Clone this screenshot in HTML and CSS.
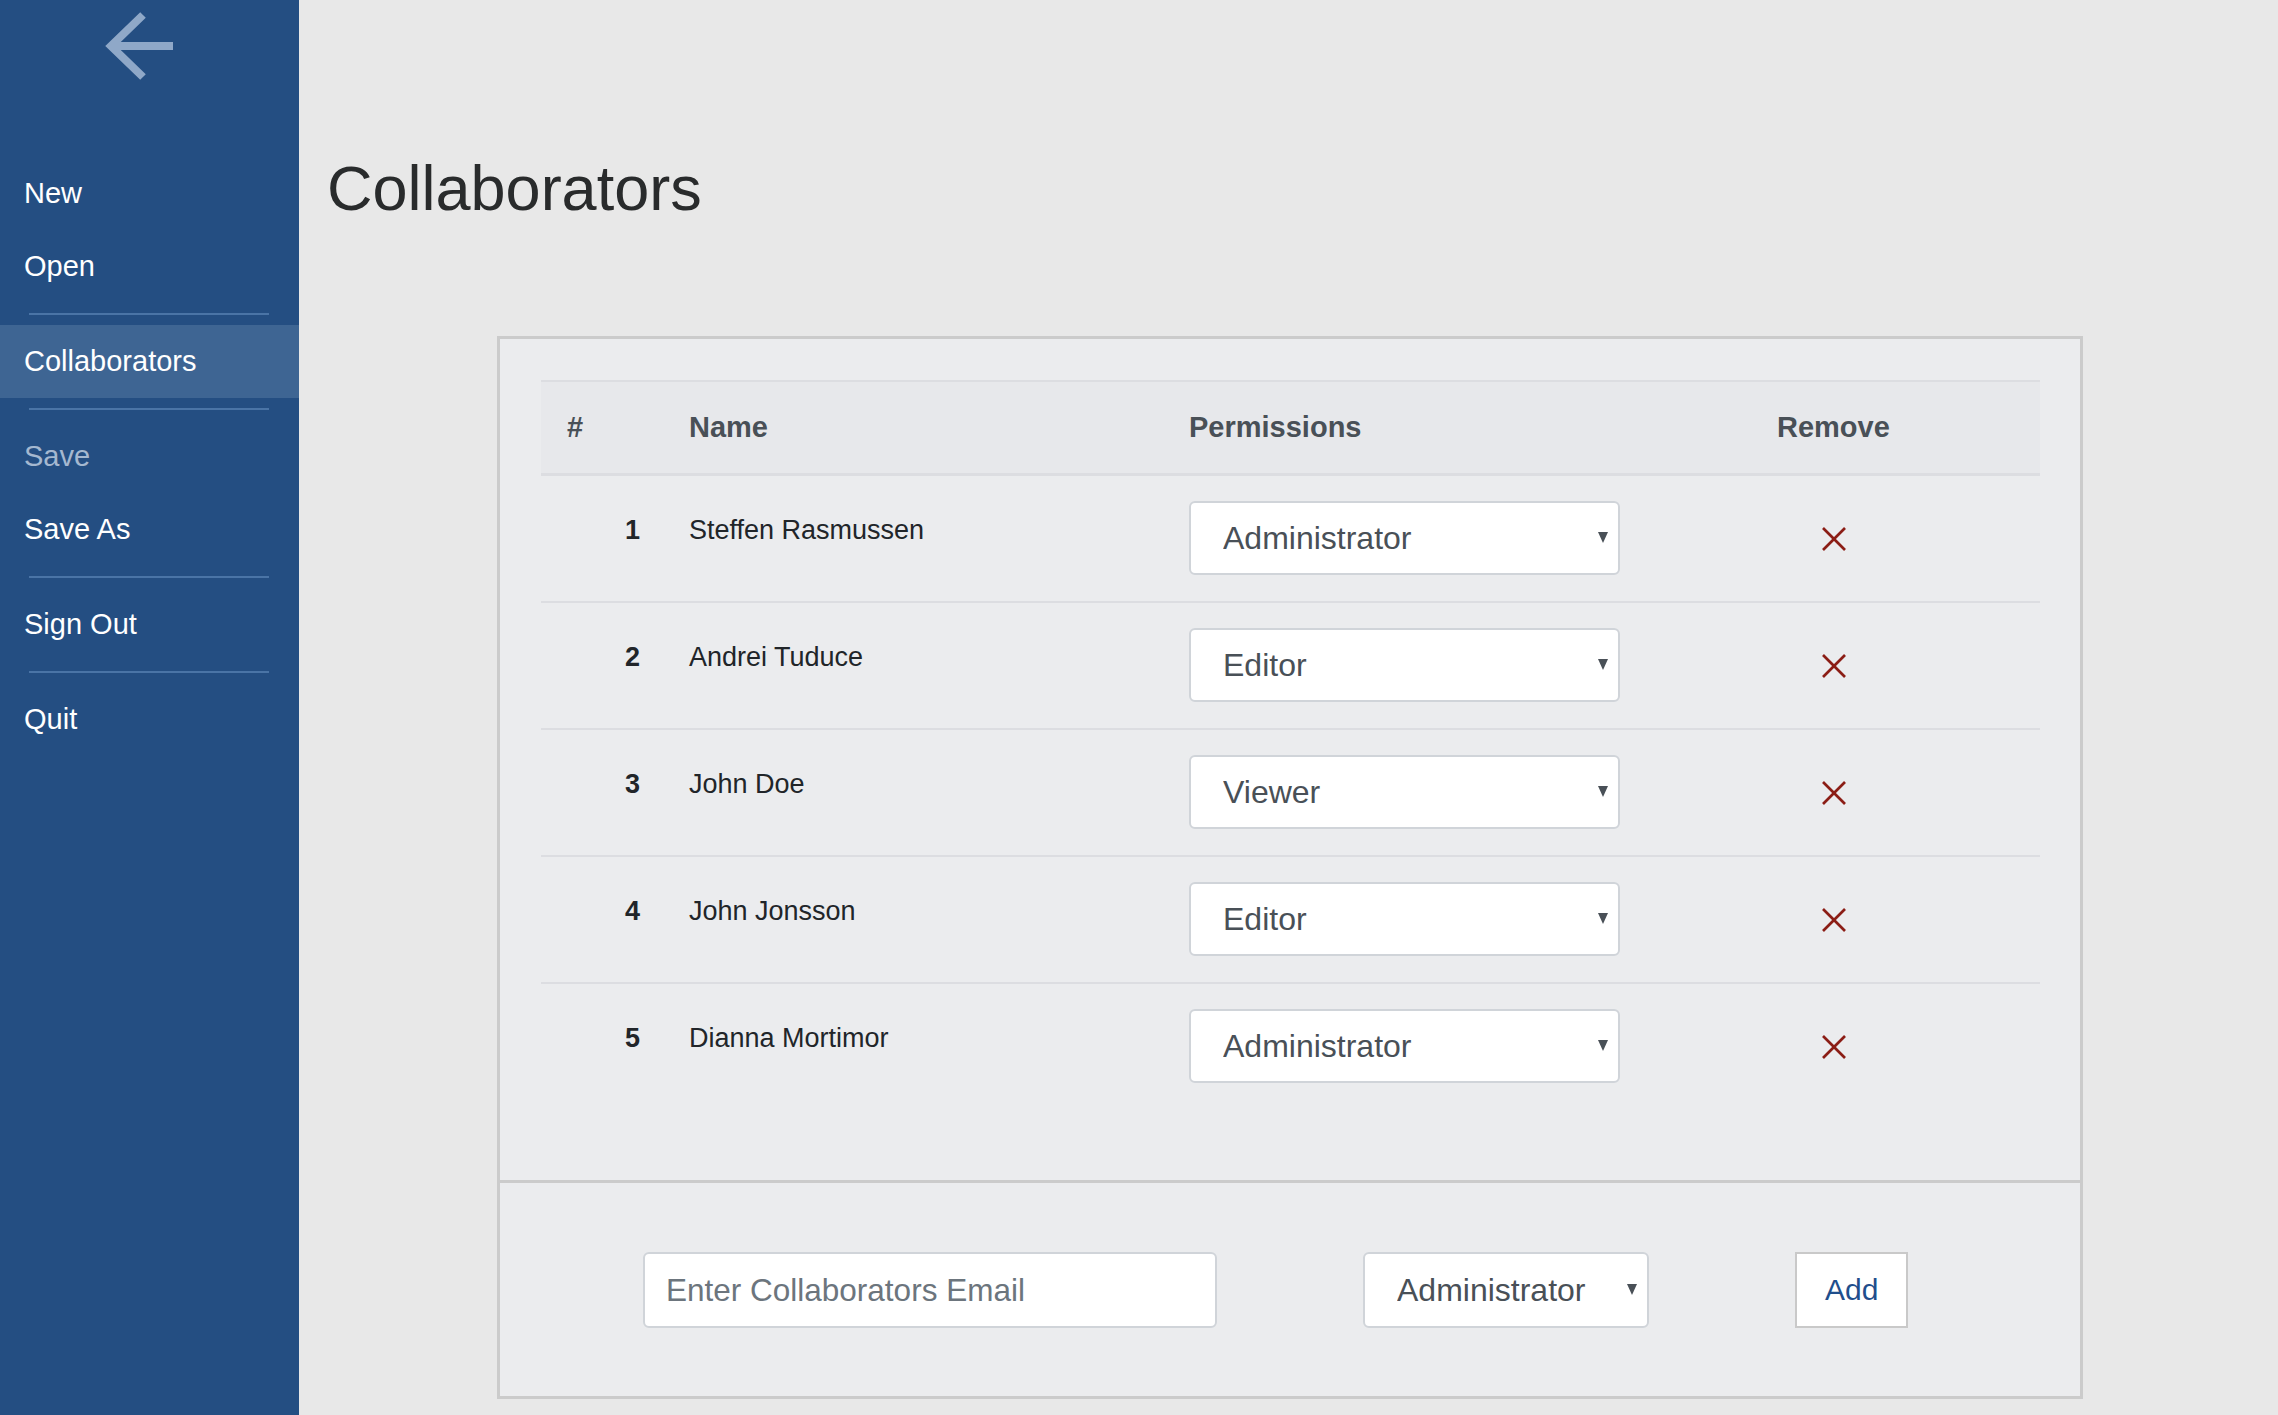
FILE: index.html
```html
<!DOCTYPE html>
<html lang="en">
<head>
    <meta charset="UTF-8">
    <title>Collaborators</title>
    <link rel="stylesheet" href="styles.css">
</head>
<body>

    <aside class="sidebar">
        <div class="back">
            <svg width="76" height="76" viewBox="0 0 76 76">
                <polyline points="42,7 10,38 42,69" fill="none" stroke="#8fa8c8" stroke-width="8"/>
                <line x1="10" y1="38" x2="72" y2="38" stroke="#8fa8c8" stroke-width="8"/>
            </svg>
        </div>
        <nav class="menu">
            <a class="menu-item" href="#">New</a>
            <a class="menu-item" href="#">Open</a>
            <hr class="menu-divider">
            <a class="menu-item active" href="#">Collaborators</a>
            <hr class="menu-divider">
            <a class="menu-item disabled" href="#">Save</a>
            <a class="menu-item" href="#">Save As</a>
            <hr class="menu-divider">
            <a class="menu-item" href="#">Sign Out</a>
            <hr class="menu-divider">
            <a class="menu-item" href="#">Quit</a>
        </nav>
    </aside>

    <main class="content">
        <h1 class="title">Collaborators</h1>

        <div class="panel">
            <div class="panel-body">
                <table class="collab-table">
                    <colgroup>
                        <col class="col-num">
                        <col class="col-name">
                        <col class="col-perm">
                        <col class="col-remove">
                    </colgroup>
                    <thead>
                        <tr>
                            <th class="num-head">#</th>
                            <th>Name</th>
                            <th>Permissions</th>
                            <th>Remove</th>
                        </tr>
                    </thead>
                    <tbody id="rows"></tbody>
                </table>
            </div>

            <div class="panel-footer">
                <input class="email-input" type="text" placeholder="Enter Collaborators Email">
                <div class="select-wrap small">
                    <select class="role-select">
                        <option selected>Administrator</option>
                        <option>Editor</option>
                        <option>Viewer</option>
                    </select>
                </div>
                <button class="add-btn">Add</button>
            </div>
        </div>
    </main>

    <script>
        const collaborators = [
            { name: "Steffen Rasmussen", role: "Administrator" },
            { name: "Andrei Tuduce", role: "Editor" },
            { name: "John Doe", role: "Viewer" },
            { name: "John Jonsson", role: "Editor" },
            { name: "Dianna Mortimor", role: "Administrator" }
        ];
        const roles = ["Administrator", "Editor", "Viewer"];

        const tbody = document.getElementById("rows");
        collaborators.forEach(function(person, i) {
            const options = roles.map(function(r) {
                return `<option${r === person.role ? " selected" : ""}>${r}</option>`;
            }).join("");
            const tr = document.createElement("tr");
            tr.innerHTML = `
                <td class="num">${i + 1}</td>
                <td class="name">${person.name}</td>
                <td><div class="select-wrap"><select class="role-select">${options}</select></div></td>
                <td><div class="remove">
                    <svg width="26" height="26" viewBox="0 0 26 26">
                        <line x1="2" y1="2" x2="24" y2="24" stroke="#8b1d15" stroke-width="2.6"/>
                        <line x1="24" y1="2" x2="2" y2="24" stroke="#8b1d15" stroke-width="2.6"/>
                    </svg>
                </div></td>
            `;
            tbody.appendChild(tr);
        });
    </script>

</body>
</html>
```

FILE: styles.css
```css
body {
    margin: 0;
    font-family: "Liberation Sans", Arial, sans-serif;
    background-color: #e8e8e8;
    display: flex;
    height: 1415px;
    overflow: hidden;
}

/* sidebar */
.sidebar {
    width: 299px;
    flex-shrink: 0;
    background-color: #244e82;
}
.back {
    height: 157px;
    box-sizing: border-box;
    padding: 8px 0 0 101px;
}
.back svg {
    display: block;
}
.menu-item {
    display: block;
    height: 73px;
    line-height: 73px;
    padding-left: 24px;
    font-size: 29px;
    color: #fff;
    text-decoration: none;
}
.menu-item.active {
    background-color: #3e6593;
}
.menu-item.disabled {
    color: #a5b8d0;
}
.menu-divider {
    border: none;
    height: 2px;
    background-color: #4a74a6;
    margin: 10px 30px 10px 29px;
}

/* main */
.content {
    flex: 1;
    padding-left: 28px;
}
.title {
    font-size: 63px;
    font-weight: normal;
    line-height: 77px;
    color: #292b2c;
    margin: 150px 0 109px 0;
}
.panel {
    width: 1586px;
    box-sizing: border-box;
    margin-left: 170px;
    border: 3px solid #cbcbcb;
    background-color: #ebecee;
}
.panel-body {
    padding: 41px 40px 71px 41px;
}

.collab-table {
    width: 100%;
    table-layout: fixed;
    border-collapse: collapse;
    color: #212529;
}
.col-num { width: 124px; }
.col-name { width: 500px; }
.col-perm { width: 588px; }
.col-remove { width: 287px; }

.collab-table th {
    text-align: left;
    font-size: 29px;
    line-height: 43px;
    color: #495057;
    background-color: #e7e8eb;
    padding: 24px 24px;
    border-top: 2px solid #dcdde1;
    border-bottom: 3px solid #dcdde1;
}
.collab-table th.num-head {
    padding-left: 26px;
}
.collab-table td {
    vertical-align: top;
    padding: 25px 24px 26px;
    border-top: 2px solid #dcdde1;
    font-size: 27px;
    line-height: 40px;
}
.collab-table td.num {
    font-weight: bold;
    text-align: right;
    padding-right: 25px;
    padding-top: 34px;
}
.collab-table td.name {
    padding-top: 34px;
}

.select-wrap {
    position: relative;
    width: 431px;
}
.select-wrap.small {
    width: 286px;
}
.select-wrap::after {
    content: "";
    position: absolute;
    right: 12px;
    top: 50%;
    margin-top: -6px;
    border-left: 5px solid transparent;
    border-right: 5px solid transparent;
    border-top: 11px solid #495057;
    pointer-events: none;
}
.role-select {
    appearance: none;
    -webkit-appearance: none;
    display: block;
    width: 100%;
    height: 74px;
    box-sizing: border-box;
    padding: 0 30px 0 32px;
    border: 2px solid #d0d4d9;
    border-radius: 6px;
    background-color: #fff;
    font-family: "Liberation Sans", Arial, sans-serif;
    font-size: 32px;
    color: #495057;
}
.remove {
    width: 114px;
    height: 74px;
    box-sizing: border-box;
    padding-top: 2px;
    display: flex;
    justify-content: center;
    align-items: center;
}

/* add form */
.panel-footer {
    border-top: 3px solid #cbcbcb;
    display: flex;
    align-items: center;
    gap: 146px;
    padding: 69px 0 68px 143px;
}
.email-input {
    width: 574px;
    height: 76px;
    box-sizing: border-box;
    padding: 0 21px;
    border: 2px solid #d0d4d9;
    border-radius: 6px;
    background-color: #fff;
    font-family: "Liberation Sans", Arial, sans-serif;
    font-size: 31.5px;
    color: #495057;
}
.email-input::placeholder {
    color: #6c757d;
}
.panel-footer .role-select {
    height: 76px;
}
.add-btn {
    height: 76px;
    padding: 0 28px;
    border: 2px solid #c9c9c9;
    border-radius: 0;
    background-color: #fff;
    font-family: "Liberation Sans", Arial, sans-serif;
    font-size: 30px;
    color: #1f4e8c;
    cursor: pointer;
}
```
